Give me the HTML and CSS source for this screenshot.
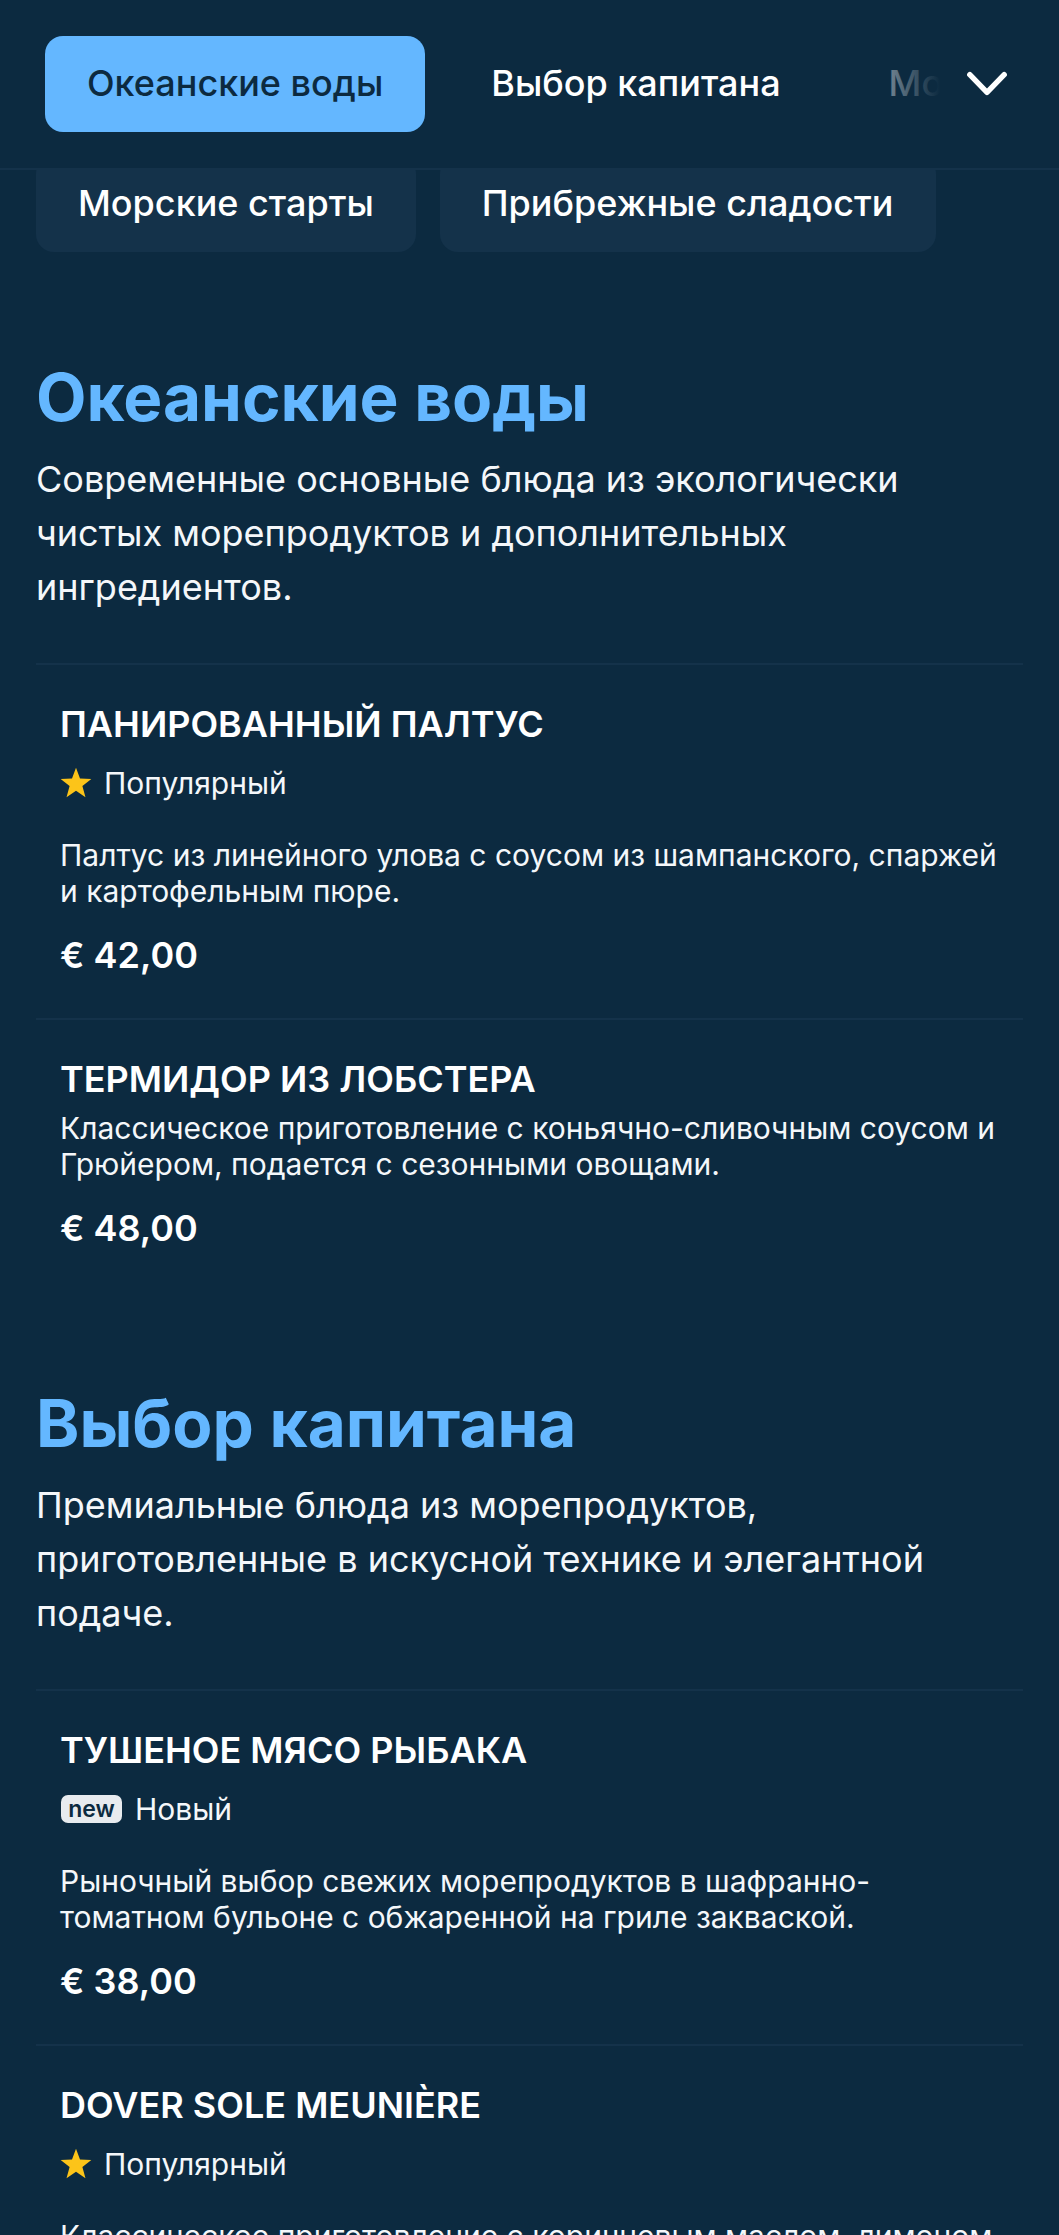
FILE: index.html
```html
<!DOCTYPE html>
<html lang="ru">
<head>
    <meta charset="UTF-8">
    <meta name="viewport" content="width=device-width, initial-scale=1.0">
    <title>Меню</title>
    <link rel="stylesheet" href="styles.css">
</head>
<body>
    <header class="topbar">
        <nav class="tabs">
            <a class="tab active" href="#ocean">Океанские воды</a>
            <a class="tab" href="#captain">Выбор капитана</a>
            <a class="tab" href="#starters">Морские старты</a>
            <a class="tab" href="#sweets">Прибрежные сладости</a>
        </nav>
        <div class="tabs-fade"></div>
        <svg class="chevron" viewBox="0 0 40 24" fill="none" stroke="#ffffff" stroke-width="5.2" stroke-linecap="round" stroke-linejoin="round">
            <path d="M3.5 3.5 L20 20.5 L36.5 3.5"/>
        </svg>
    </header>

    <div class="pills-row">
        <a class="pill" href="#starters">Морские старты</a>
        <a class="pill" href="#sweets">Прибрежные сладости</a>
    </div>

    <main class="menu">
        <section class="section" id="ocean">
            <h2>Океанские воды</h2>
            <p class="intro">Современные основные блюда из экологически чистых морепродуктов и дополнительных ингредиентов.</p>

            <article class="item">
                <h3>Панированный палтус</h3>
                <div class="tag">
                    <svg class="star" viewBox="0 0 24 24"><path d="M12 0.5 L15 8.6 L23.5 9 L16.8 14.3 L19.1 22.6 L12 17.8 L4.9 22.6 L7.2 14.3 L0.5 9 L9 8.6 Z"/></svg>
                    Популярный
                </div>
                <p class="desc">Палтус из линейного улова с соусом из шампанского, спаржей и картофельным пюре.</p>
                <div class="price">€ 42,00</div>
            </article>

            <article class="item">
                <h3 class="tight">Термидор из лобстера</h3>
                <p class="desc">Классическое приготовление с коньячно-сливочным соусом и Грюйером, подается с сезонными овощами.</p>
                <div class="price">€ 48,00</div>
            </article>
        </section>

        <section class="section" id="captain">
            <h2>Выбор капитана</h2>
            <p class="intro">Премиальные блюда из морепродуктов, приготовленные в искусной технике и элегантной подаче.</p>

            <article class="item">
                <h3>Тушеное мясо рыбака</h3>
                <div class="tag">
                    <span class="new-badge">new</span>
                    Новый
                </div>
                <p class="desc">Рыночный выбор свежих морепродуктов в шафранно-томатном бульоне с обжаренной на гриле закваской.</p>
                <div class="price">€ 38,00</div>
            </article>

            <article class="item">
                <h3>Dover Sole Meunière</h3>
                <div class="tag">
                    <svg class="star" viewBox="0 0 24 24"><path d="M12 0.5 L15 8.6 L23.5 9 L16.8 14.3 L19.1 22.6 L12 17.8 L4.9 22.6 L7.2 14.3 L0.5 9 L9 8.6 Z"/></svg>
                    Популярный
                </div>
                <p class="desc">Классическое приготовление с коричневым маслом, лимоном и каперсами.</p>
                <div class="price">€ 54,00</div>
            </article>
        </section>
    </main>
</body>
</html>
```

FILE: styles.css
```css
* {
    margin: 0;
    padding: 0;
    box-sizing: border-box;
}

html, body {
    height: 100vh;
    overflow: hidden;
}

body {
    background-color: #0c2a40;
    color: #ffffff;
    font-family: 'Inter', sans-serif;
}

a {
    color: inherit;
    text-decoration: none;
}

.topbar {
    position: relative;
    height: 170px;
    padding: 36px 0 0 45px;
    border-bottom: 2px solid #14324a;
    overflow: hidden;
}

.tabs {
    display: flex;
    gap: 24px;
    width: 1400px;
}

.tab {
    flex: none;
    height: 96px;
    padding: 0 42px 2px;
    display: flex;
    align-items: center;
    font-size: 36px;
    font-weight: 500;
    border-radius: 18px;
    white-space: nowrap;
}

.tab.active {
    background-color: #64b7ff;
    color: #0c2a40;
}

.tabs-fade {
    position: absolute;
    top: 0;
    left: 884px;
    right: 0;
    height: 168px;
    background: linear-gradient(to right, rgba(12, 42, 64, 0.55) 0, #0c2a40 56px);
}

.chevron {
    position: absolute;
    top: 71px;
    left: 966px;
    width: 42px;
    height: 25px;
}

.pills-row {
    height: 82px;
    padding: 0 36px;
    display: flex;
    align-items: flex-end;
    gap: 24px;
    overflow: hidden;
}

.pill {
    flex: none;
    height: 96px;
    padding: 0 42px 2px;
    display: flex;
    align-items: center;
    font-size: 36px;
    font-weight: 500;
    background-color: #14324a;
    border-radius: 18px;
    white-space: nowrap;
}

.menu {
    padding: 0 36px;
}

.section {
    padding-top: 106px;
}

.section + .section {
    padding-top: 93px;
}

h2 {
    font-size: 65.6px;
    line-height: 78px;
    font-weight: 700;
    color: #64b7ff;
}

.intro {
    margin-top: 16px;
    font-size: 36px;
    line-height: 54px;
    color: #f4f7fa;
}

.item {
    padding: 37px 24px 41px;
    border-top: 2px solid #14324a;
}

.intro + .item {
    margin-top: 49px;
}

h3 {
    font-size: 36px;
    line-height: 44px;
    font-weight: 600;
    text-transform: uppercase;
}

.tag {
    margin-top: 14px;
    display: flex;
    align-items: center;
    gap: 12px;
    height: 46px;
    font-size: 30px;
    color: #f4f7fa;
}

.star {
    width: 32px;
    height: 32px;
    fill: #fcc419;
}

.new-badge {
    display: inline-flex;
    align-items: center;
    justify-content: center;
    width: 61px;
    height: 28px;
    margin: 0 1px;
    background-color: #e8ebef;
    border-radius: 7px;
    color: #0c2a40;
    font-size: 23px;
    font-weight: 600;
}

.desc {
    margin-top: 31px;
    font-size: 30px;
    line-height: 36px;
    color: #f4f7fa;
}

h3.tight + .desc {
    margin-top: 9px;
}

.price {
    margin-top: 24px;
    font-size: 36px;
    line-height: 44px;
    font-weight: 600;
}
```
